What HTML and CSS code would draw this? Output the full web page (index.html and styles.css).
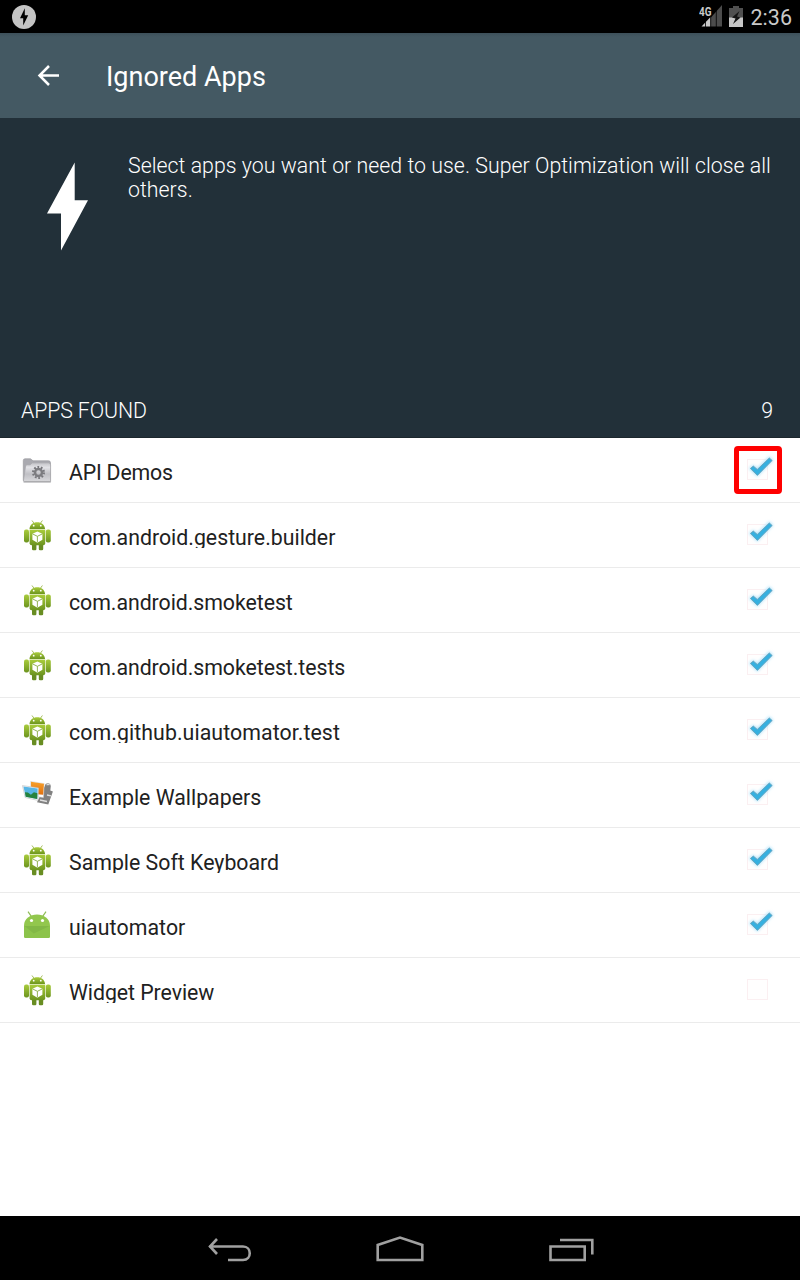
FILE: index.html
```
<!DOCTYPE html>
<html lang="en">
<head>
<meta charset="utf-8">
<title>Ignored Apps</title>
<link rel="stylesheet" href="styles.css">
</head>
<body>
<svg class="defs" width="0" height="0">
  <defs>
    <linearGradient id="green" x1="0" y1="0" x2="0" y2="1"><stop offset="0" stop-color="#a9cc3c"/><stop offset="1" stop-color="#6c941f"/></linearGradient>
    <linearGradient id="silver" x1="0" y1="0" x2="0" y2="1"><stop offset="0" stop-color="#c3c3c8"/><stop offset=".25" stop-color="#e2e2e6"/><stop offset=".6" stop-color="#c0c0c5"/><stop offset="1" stop-color="#d9d9dc"/></linearGradient>
    <linearGradient id="orange" x1="0" y1="0" x2="0" y2="1"><stop offset="0" stop-color="#f7a12b"/><stop offset="1" stop-color="#e2700f"/></linearGradient>
    <filter id="glow" x="-40%" y="-40%" width="180%" height="180%"><feGaussianBlur stdDeviation="1.7"/></filter>
  </defs>
  <symbol id="robot" viewBox="0 0 32 34">
    <path d="M11 2.5l2.3 3.2M21.4 2.5l-2.3 3.2" stroke="#a5bf60" stroke-width="1" fill="none"/>
    <path d="M8.5 11C8.7 7 12 4.3 16.2 4.3S23.8 7 24 11z" fill="url(#green)"/>
    <circle cx="12.7" cy="7.7" r=".9" fill="#fff"/><circle cx="19.8" cy="7.7" r=".9" fill="#fff"/>
    <rect x="3" y="11.5" width="5" height="13" rx="2" fill="url(#green)"/>
    <rect x="24.8" y="11.5" width="5" height="13" rx="2" fill="url(#green)"/>
    <path d="M11 25h4.400v6a1.200 1.200 0 0 1-1.200 1.200h-2A1.200 1.200 0 0 1 11 31zM17.800 25h4.400v6a1.200 1.200 0 0 1-1.200 1.200h-2a1.200 1.200 0 0 1-1.200-1.200z" fill="#688d22"/>
    <path d="M8.600 11.700h15.600v13.600a2 2 0 0 1-2 2H10.600a2 2 0 0 1-2-2z" fill="url(#green)"/>
    <path d="M8.600 11.500h15.600" stroke="#d2e39a" stroke-width=".6"/>
    <path d="M16.400 13.500l5 2.200v6l-5 3-5-3v-6z" fill="#fff"/>
    <path d="M11.500 15.900l4.900 2.400 4.900-2.400M16.400 18.300v6" stroke="#88aa43" stroke-width=".9" fill="none"/>
  </symbol>
  <symbol id="folder" viewBox="0 0 32 34">
    <path d="M2.300 24.500V4.500Q2.300 2.800 4 2.800h5.500l2.500 2h15.500q2 0 2 2v17.700z" fill="#aaaab0" stroke="#9c9ca1" stroke-width=".7"/>
    <path d="M3.500 25.600q-1.200 0-1-1.200L4.600 10q.3-1.200 1.500-1.200h3.200l2-2h16q2 .2 2.300 2v16.800z" fill="url(#silver)" stroke="#a6a6aa" stroke-width=".7"/>
    <circle cx="17.500" cy="16.500" r="5.400" fill="none" stroke="#77777b" stroke-width="2.200" stroke-dasharray="1.700 1.693"/>
    <circle cx="17.500" cy="16.500" r="3.500" fill="none" stroke="#7c7c80" stroke-width="2.500"/>
    <path d="M2.500 26h27.300" stroke="#8e8e92" stroke-width=".8"/>
  </symbol>
  <symbol id="photos" viewBox="0 0 32 34">
    <path d="M24 7.500q.3-2.300 3.300-2.300 2.300.2 2.500 2.800l-.5 4.500 2.600 1-4.600 13-11.300-2.300z" fill="#818181"/>
    <path d="M25.500 7q2-1.200 3 0M26 17l4 .8M19 22l7 1.500" stroke="#dedede" stroke-width="1.300"/>
    <path d="M9.500 3.400l13.800 2.200-.9 14-12.900-2z" fill="#fff" stroke="#cecece" stroke-width=".5"/>
    <path d="M10 3.700l13 2-.9 11-12-1z" fill="url(#orange)"/>
    <path d="M1.500 7.600l16 2.300-.6 12.500L4.200 19.500z" fill="#fff" stroke="#bbb" stroke-width=".6"/>
    <path d="M2.400 8.500l14.300 2-.5 10.600-11.500-2.400z" fill="#58b6e6"/>
    <path d="M3.900 14.200l3 .3 3 2.300 3-2.600 3.500 1-.2 5.900-11.500-2.400z" fill="#26833e"/>
  </symbol>
  <symbol id="droid" viewBox="0 0 32 34">
    <path d="M7 3.700l3.500 5M25 3.700l-3.500 5" stroke="#8fbd57" stroke-width="1.200"/>
    <path d="M3 17.200C3.300 10.700 9 6.500 16 6.500s12.700 4.200 13 10.700v11q0 1.700-1.600 1.700H4.600Q3 29.900 3 28.200z" fill="#92c74d"/>
    <path d="M3 18h26v10.300q0 1.600-1.600 1.600H4.600Q3 29.900 3 28.300z" fill="#8cc34b"/>
    <path d="M3.500 18h25L12.800 25.500z" fill="#82b846"/>
    <circle cx="10.500" cy="12.500" r="1.600" fill="#fff"/><circle cx="21.500" cy="12.500" r="1.600" fill="#fff"/>
  </symbol>
  <symbol id="box" viewBox="0 0 32 32">
    <rect x="4.500" y="7.500" width="20" height="20" fill="#fffefe" stroke="#fbeff1"/>
  </symbol>
  <symbol id="checked" viewBox="0 0 32 32">
    <use href="#box"/>
    <path d="M7.300 16.300l3-2.300 4 3.300L26.300 5.700 29 8.300l-14.700 15z" fill="#9cdcfa" stroke="#b5e5fb" stroke-width="2" filter="url(#glow)"/>
    <path d="M7.400 16.500l2.900-2.400 4 3.400L26.300 6l2.800 2.500-14.700 14.900z" fill="#36b0e0" stroke="#6aa3bb" stroke-width=".9"/>
  </symbol>
</svg>
<div class="screen">
  <header class="status">
    <svg width="24" height="24" viewBox="0 0 24 24"><circle cx="12" cy="12" r="12" fill="#c4c4c4"/><path d="M12.800 3.300v7h3.400l-5 10.200v-7.200H8z" fill="#000"/></svg>
    <div class="status-right">
      <svg width="24" height="24" viewBox="0 0 24 24"><path d="M11.500 13L23 0v21.500H11.500z" fill="#4c4c4c"/><path d="M2.500 21.500L11.500 12v9.500z" fill="#c9c9c9"/><path d="M6.500 11v11M11.700 6v16M17.300 3v19" stroke="#000" stroke-width=".8"/><text x="0" y="11" class="network" textLength="12.500" lengthAdjust="spacingAndGlyphs">4G</text></svg>
      <svg width="14" height="24" viewBox="0 0 14 24"><path d="M0 3h4V1h6v2h4v19H0z" fill="#505050"/><path d="M0 12.500h14V22H0z" fill="#c7c7c7"/><path d="M10.500 6L3 12.500l3.500 1L4 19l7.500-6.500-3.500-1z" fill="#151515"/></svg>
      <span class="clock">2:36</span>
    </div>
  </header>
  <div class="toolbar">
    <svg width="24" height="24" viewBox="0 0 24 24" fill="none" stroke="#fff" stroke-width="2.500"><path d="M23 11.500H3.500M13 2L3.500 11.500 13 21"/></svg>
    <h1 class="title">Ignored Apps</h1>
  </div>
  <section class="intro">
    <div class="intro-body">
      <svg width="44" height="90" viewBox="0 0 44 90"><path d="M28.700 .5V38.300H42L15 88.500V51.500H1z" fill="#fff"/></svg>
      <p class="intro-text">Select apps you want or need to use. Super Optimization will close all others.</p>
    </div>
    <div class="found"><span class="found-label">APPS FOUND</span><span>9</span></div>
  </section>
  <ul class="list">
    <li class="row"><svg class="icon"><use href="#folder"/></svg><span class="name tight">API Demos</span><svg class="check"><use href="#checked"/></svg><span class="highlight"></span></li>
    <li class="row"><svg class="icon"><use href="#robot"/></svg><span class="name">com.android.gesture.builder</span><svg class="check"><use href="#checked"/></svg></li>
    <li class="row"><svg class="icon"><use href="#robot"/></svg><span class="name snug">com.android.smoketest</span><svg class="check"><use href="#checked"/></svg></li>
    <li class="row"><svg class="icon"><use href="#robot"/></svg><span class="name snug">com.android.smoketest.tests</span><svg class="check"><use href="#checked"/></svg></li>
    <li class="row"><svg class="icon"><use href="#robot"/></svg><span class="name wide">com.github.uiautomator.test</span><svg class="check"><use href="#checked"/></svg></li>
    <li class="row"><svg class="icon"><use href="#photos"/></svg><span class="name">Example Wallpapers</span><svg class="check"><use href="#checked"/></svg></li>
    <li class="row"><svg class="icon"><use href="#robot"/></svg><span class="name">Sample Soft Keyboard</span><svg class="check"><use href="#checked"/></svg></li>
    <li class="row"><svg class="icon"><use href="#droid"/></svg><span class="name wide">uiautomator</span><svg class="check"><use href="#checked"/></svg></li>
    <li class="row"><svg class="icon"><use href="#robot"/></svg><span class="name snug">Widget Preview</span><svg class="check"><use href="#box"/></svg></li>
  </ul>
  <nav class="nav">
    <svg width="48" height="32" viewBox="0 0 48 32"><path d="M5 14.500h34c9 0 9 13.500 0 13.500H24M13 7L6 14.500l7 7.500"/></svg>
    <svg width="48" height="32" viewBox="0 0 48 32"><path d="M1.700 28V13L24 5.500 46.300 13v15z"/></svg>
    <svg width="48" height="32" viewBox="0 0 48 32"><path d="M2.500 14.500h34.200V28H2.500zM12 8h32.300v14.500"/></svg>
  </nav>
</div>
</body>
</html>
```
FILE: styles.css
```
body {
  margin: 0;
  font-family: Roboto, sans-serif;
}
.defs { position: absolute; }
.screen {
  width: 800px;
  height: 1280px;
  display: flex;
  flex-direction: column;
  background: #fff;
  overflow: hidden;
}
.status {
  height: 33px;
  box-sizing: border-box;
  padding: 0 8px 0 12px;
  display: flex;
  align-items: center;
  justify-content: space-between;
  background: #000;
}
.status-right { display: flex; align-items: center; }
.status-right svg + svg { margin: 0 8px 0 6px; }
.network { font-size: 12.500px; font-weight: 700; fill: #c9c9c9; }
.clock { color: #c9c9c9; font-size: 21.500px; line-height: 33px; padding-top: 2px; }
.toolbar {
  height: 85px;
  display: flex;
  align-items: center;
  gap: 46px;
  padding-left: 36px;
  background: linear-gradient(#3d505a, #445963 4px);
}
.title { margin: 2px 0 0; font-size: 27px; font-weight: 400; color: #fff; line-height: 32px; }
.intro {
  height: 320px;
  display: flex;
  flex-direction: column;
  justify-content: space-between;
  box-sizing: border-box;
  border-bottom: 1px solid #1c272d;
  background: #223039;
  color: #fff;
  font-weight: 300;
}
.intro-body { display: flex; gap: 38px; padding: 36px 20px 0 46px; }
.intro-body svg { flex: none; margin-top: 8px; }
.intro-text { margin: 0; font-size: 21.300px; line-height: 24px; letter-spacing: .03px; }
.found {
  display: flex;
  justify-content: space-between;
  padding: 0 27px 13px 21px;
  font-size: 21.300px;
  line-height: 26px;
}
.found-label { letter-spacing: -.1px; }
.list { margin: 0; padding: 0; list-style: none; flex: 1; }
.row {
  position: relative;
  height: 65px;
  box-sizing: border-box;
  border-bottom: 1px solid #ebebeb;
  display: flex;
  align-items: flex-start;
  padding: 0 25px 0 21px;
}
.icon { width: 32px; height: 34px; margin-top: 15px; }
.row:first-child .icon { margin-top: 18px; }
.name {
  flex: 1;
  margin: 21px 0 0 16px;
  height: 24px;
  overflow: hidden;
  font-size: 21.300px;
  line-height: 27px;
  color: #212121;
}
.tight { letter-spacing: -.2px; }
.snug { letter-spacing: -.05px; }
.wide { letter-spacing: .08px; }
.check { width: 32px; height: 32px; margin-top: 14px; overflow: visible; }
.highlight {
  position: absolute;
  top: 8px;
  right: 18px;
  width: 38px;
  height: 38px;
  border: 5px solid #f00;
  border-radius: 4px;
}
.nav {
  height: 64px;
  display: flex;
  justify-content: center;
  align-items: center;
  gap: 124px;
  box-sizing: border-box;
  background: #000;
}
.nav svg { fill: none; stroke: #a0a0a0; stroke-width: 2.600; }
```
